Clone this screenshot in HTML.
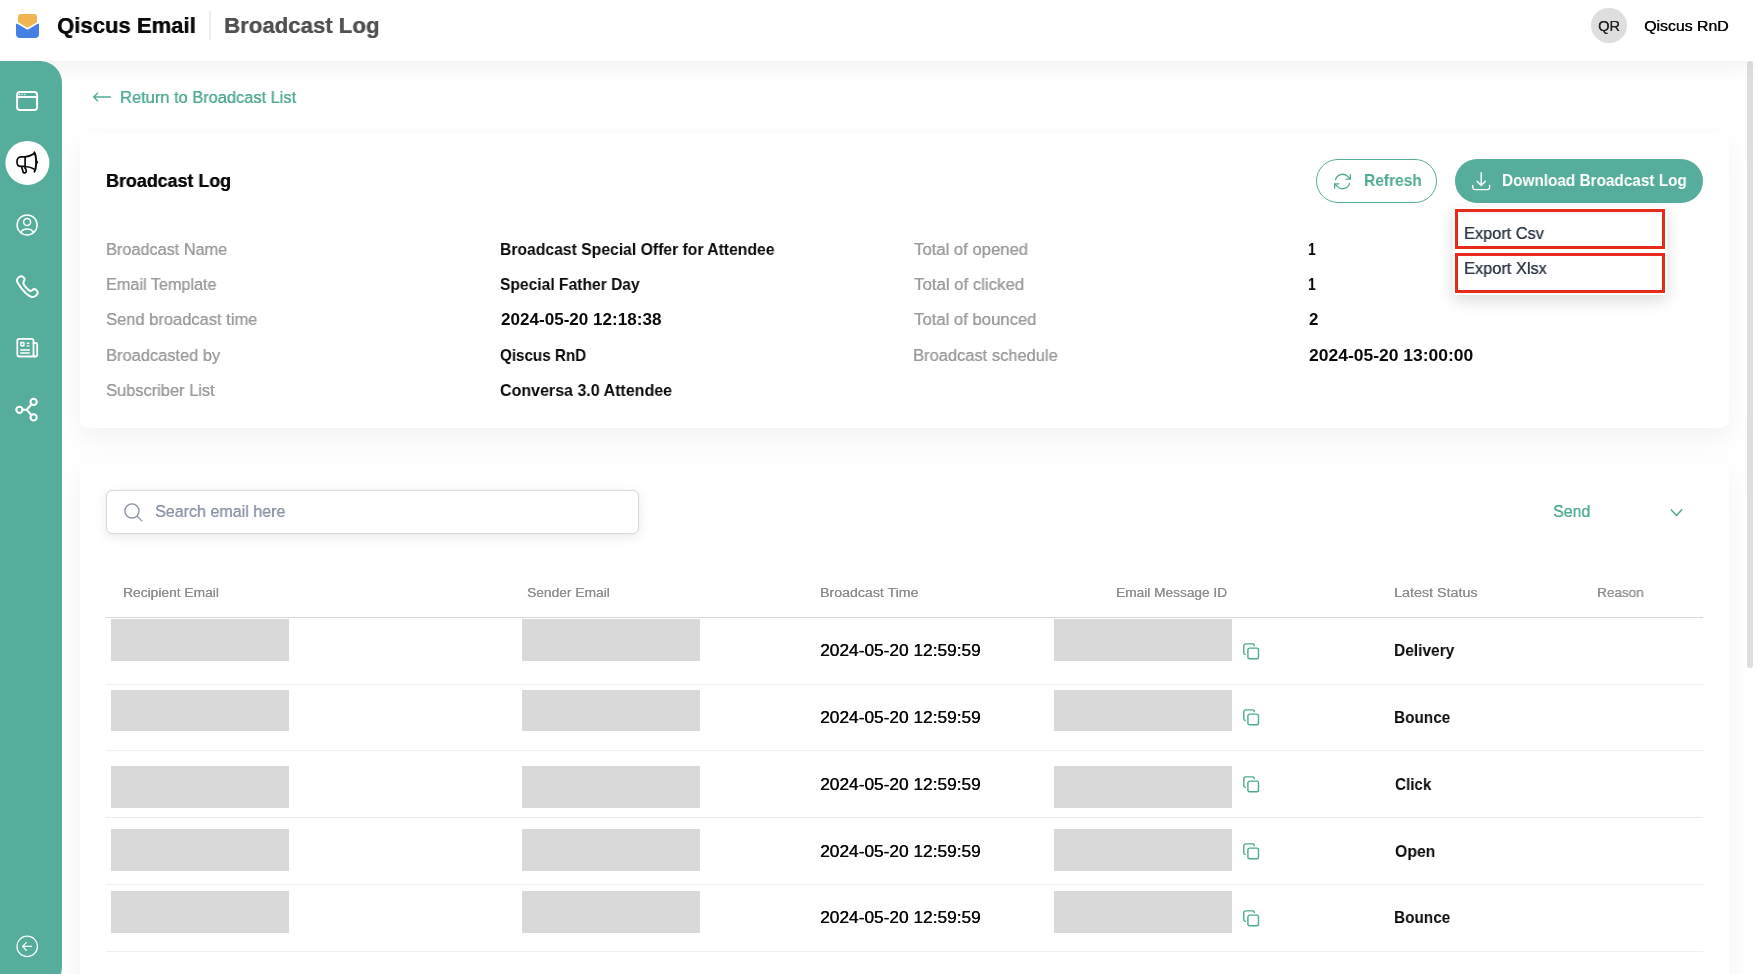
<!DOCTYPE html>
<html lang="en">
<head>
<meta charset="utf-8">
<title>Qiscus Email - Broadcast Log</title>
<style>
*{box-sizing:border-box;margin:0;padding:0}
html,body{width:1756px;height:974px;overflow:hidden;background:#fff;font-family:"Liberation Sans",sans-serif;color:#000}
.abs{position:absolute;white-space:nowrap;line-height:1}
#header{position:absolute;left:0;top:0;width:1756px;height:61px;background:#fff;box-shadow:0 0 28px rgba(0,0,0,.09);z-index:1}
#sidebar{z-index:2;position:absolute;left:0;top:61px;width:62px;height:928px;background:#57ad9b;border-radius:0 22px 22px 0}
.card{position:absolute;left:80px;width:1649px;background:#fff;border-radius:8px;box-shadow:0 10px 30px rgba(0,0,0,.06)}
.tx{will-change:transform;z-index:3;position:absolute;white-space:nowrap;line-height:1;transform-origin:0 0}
.blk{position:absolute;background:#d9d9d9}
.hl{position:absolute;left:106px;width:1597px;height:1px;background:#eef0f4}
</style>
</head>
<body>
<div id="header">
  <svg class="abs" style="left:16px;top:14px" width="23" height="24" viewBox="0 0 23 24">
    <path d="M2 3a3 3 0 0 1 3-3h13a3 3 0 0 1 3 3v5.200l-8.500 5a2 2 0 0 1-2 0L2 8.200z" fill="#f0b552"/>
    <path d="M0 10.600a.9.900 0 0 1 1.350-.780L10.500 15.200a2 2 0 0 0 2 0l9.150-5.380A.9.900 0 0 1 23 10.600V20a4 4 0 0 1-4 4H4a4 4 0 0 1-4-4z" fill="#457fe4"/>
  </svg>
  <div class="abs" style="left:209px;top:11px;width:2px;height:29px;background:#eeeeee"></div>
  <div class="abs" style="left:1591.200px;top:7.800px;width:35.600px;height:35.600px;border-radius:50%;background:#dedede"></div>
</div>
<div id="sidebar"></div>
<svg class="abs" id="sideicons" style="left:0;top:0;z-index:2" width="62" height="974" viewBox="0 0 62 974" fill="none" stroke="#fff" stroke-width="1.500" stroke-linecap="round" stroke-linejoin="round">
  <!-- window -->
  <rect x="17.100" y="92.100" width="20" height="18" rx="2.800" stroke-width="2"/>
  <path d="M17.100 96.900H37.100" stroke-width="2"/>
  <path d="M19.600 94.500h.01M22.200 94.500h.01M24.800 94.500h.01" stroke-width="1.300"/>
  <!-- active circle + megaphone -->
  <circle cx="27.400" cy="162.900" r="22" fill="#fff" stroke="none"/>
  <g stroke="#0b0b0b" stroke-width="1.700">
    <path d="M25.100 156.800H21C18.400 156.800 16.950 159.200 16.950 161.700C16.950 164.200 18.400 166.400 21 166.400H25.200"/>
    <path d="M25.100 156.800V168.200"/>
    <path d="M25.100 156.800C28.500 156.400 31.800 155.400 34 153.800M25.300 166.500C28.600 166.800 31.800 167.600 34 169"/>
    <path d="M34.400 152.400C36.700 156.500 36.700 167.500 34.500 171.600" stroke-width="2"/>
    <path d="M21.800 167.300L23.100 172.100C23.700 173.700 26.800 172.800 26.300 171L25.400 167.800"/>
    <path d="M36.900 161.300a1 1 0 0 1 0 1.700" stroke-width="1.500"/>
  </g>
  <!-- person circle -->
  <circle cx="27.100" cy="224.900" r="10"/>
  <circle cx="27.100" cy="222" r="3.500"/>
  <path d="M20.600 232.400c1.200-2.300 3.600-3.500 6.500-3.500s5.300 1.200 6.500 3.500"/>
  <!-- phone -->
  <path stroke-width="2" d="M16.950 280.400C16.950 278.600 19.300 276.200 21.050 276.200C22.600 276.200 24.700 278 24.700 279.300C24.700 280.600 23 281.600 23.350 283.300C23.900 285.800 28 290.200 30.550 291C32 291.400 32.600 289.050 34 289.050C35.600 289.050 37.750 291 37.750 292.700C37.750 294.600 34.800 296.950 32.900 296.950C30.500 296.950 27.500 294.900 24.900 292.250C22 289.300 19.600 286 18.800 284.550C17.900 282.900 16.950 281.800 16.950 280.400Z"/>
  <!-- newspaper -->
  <g stroke-width="1.800">
  <path d="M33.500 342.900h2.200a1.500 1.500 0 0 1 1.500 1.500v10.300a1.850 1.850 0 0 1-3.700 0"/>
  <path d="M33.500 354.700V340.500a1.700 1.700 0 0 0-1.700-1.700H19a1.700 1.700 0 0 0-1.700 1.700v14a2 2 0 0 0 2 2h16"/>
  </g>
  <rect x="20.900" y="342.500" width="3" height="3.300" rx=".3" stroke-width="1.500"/>
  <path d="M27.200 343.200h1.800M27.200 345.900h1.800" stroke-width="1.400"/>
  <path d="M20.700 350h8.600M20.700 353h8.600" stroke-width="1.600"/>
  <!-- share -->
  <g stroke-width="2.100">
  <circle cx="19.400" cy="409.800" r="3.100"/>
  <circle cx="33.600" cy="401.900" r="3.100"/>
  <circle cx="33.600" cy="417.400" r="3.100"/>
  <path d="M22.500 409.800H26.600M31.600 404.250L26.600 409.800L31.500 415.100"/>
  </g>
  <!-- back circle -->
  <circle cx="27.200" cy="946.400" r="10.200" stroke-width="1.200"/>
  <path d="M31.600 946.400h-8.800M26.300 942.600l-3.800 3.800 3.800 3.800" stroke-width="1.300"/>
</svg>


<!-- return link -->
<svg class="abs" style="left:90px;top:90px" width="24" height="14" viewBox="90 90 24 14" fill="none" stroke="#4fa994" stroke-width="1.300" stroke-linecap="round" stroke-linejoin="round"><path d="M110.400 97H93.800M97.500 93.200L93.700 97l3.800 3.800"/></svg>

<!-- card 1 -->
<div class="card" id="card1" style="top:133px;height:295px"></div>

<div class="abs" style="left:1316px;top:159px;width:121px;height:44px;border:1px solid #57ad9b;border-radius:22px;background:#fff"></div>
<svg class="abs" style="left:1332.400px;top:170.700px" width="21" height="21" viewBox="0 0 24 24" fill="none" stroke="#4fa994" stroke-width="1.500" stroke-linecap="round" stroke-linejoin="round"><path d="M16.023 9.348h4.992v-.001M2.985 19.644v-4.992m0 0h4.992m-4.993 0l3.181 3.183a8.250 8.250 0 0013.803-3.700M4.031 9.865a8.250 8.250 0 0113.803-3.700l3.181 3.182m0-4.991v4.990"/></svg>
<div class="abs" style="left:1455px;top:159px;width:248px;height:44px;border-radius:22px;background:#57ad9b"></div>
<svg class="abs" style="left:1469.800px;top:169.800px" width="22.400" height="22.400" viewBox="0 0 24 24" fill="none" stroke="#fff" stroke-width="1.500" stroke-linecap="round" stroke-linejoin="round"><path d="M3 16.500v2.250A2.250 2.250 0 005.250 21h13.500A2.250 2.250 0 0021 18.750V16.500M16.500 12L12 16.500m0 0L7.500 12m4.500 4.500V3"/></svg>
<!-- dropdown -->
<div class="abs" style="left:1453px;top:207px;width:214px;height:88px;background:#fff;border-radius:4px;box-shadow:0 6px 16px rgba(0,0,0,.14)"></div>
<div class="abs" style="left:1455px;top:209px;width:210px;height:40px;border:3px solid #e7291c"></div>
<div class="abs" style="left:1455px;top:253px;width:210px;height:40px;border:3px solid #e7291c"></div>

<!-- card 2 -->
<div class="card" id="card2" style="top:463px;height:560px"></div>


<div class="abs" style="left:106px;top:490px;width:532.500px;height:43.500px;border:1.300px solid #d3d7de;border-radius:6px;background:#fff;box-shadow:0 3px 12px rgba(0,0,0,.09)"></div>
<svg class="abs" style="left:121.700px;top:500.600px" width="22.700" height="22.700" viewBox="0 0 24 24" fill="none" stroke="#8a92a3" stroke-width="1.400" stroke-linecap="round" stroke-linejoin="round"><path d="M21 21l-5.197-5.197m0 0A7.500 7.500 0 105.196 5.196a7.500 7.500 0 0010.607 10.607z"/></svg>
<svg class="abs" style="left:1668px;top:506px" width="18" height="14" viewBox="1668 506 18 14" fill="none" stroke="#4fa994" stroke-width="1.500" stroke-linecap="round" stroke-linejoin="round"><path d="M1671.400 509.900l5.100 5.500 5.100-5.500"/></svg>
<div class="abs" style="left:106px;top:616.500px;width:1597px;height:1.300px;background:#d4d7de"></div>
<div class="hl" style="top:684px"></div>
<div class="hl" style="top:750px"></div>
<div class="hl" style="top:817px;background:#e9ebef"></div>
<div class="hl" style="top:884px"></div>
<div class="hl" style="top:951px"></div>
<div class="blk" style="left:111px;top:619px;width:178px;height:41.5px"></div>
<div class="blk" style="left:522px;top:619px;width:178px;height:41.5px"></div>
<div class="blk" style="left:1054px;top:619px;width:178px;height:41.5px"></div>
<svg class="abs" style="left:1243px;top:642.5999999999999px" width="18" height="18" viewBox="0 0 18 18" fill="none" stroke="#4fa994" stroke-width="1.400" stroke-linecap="round" stroke-linejoin="round"><rect x="4.900" y="5.100" width="10.600" height="10.700" rx="1.800"/><path d="M11.300 2.600a1.600 1.600 0 0 0-1.500-1.700H2.600A1.800 1.800 0 0 0 .8 2.700v6.900a1.800 1.800 0 0 0 1.500 1.900"/></svg>
<div class="blk" style="left:111px;top:690px;width:178px;height:41.3px"></div>
<div class="blk" style="left:522px;top:690px;width:178px;height:41.3px"></div>
<div class="blk" style="left:1054px;top:690px;width:178px;height:41.3px"></div>
<svg class="abs" style="left:1243px;top:709.3px" width="18" height="18" viewBox="0 0 18 18" fill="none" stroke="#4fa994" stroke-width="1.400" stroke-linecap="round" stroke-linejoin="round"><rect x="4.900" y="5.100" width="10.600" height="10.700" rx="1.800"/><path d="M11.300 2.600a1.600 1.600 0 0 0-1.500-1.700H2.600A1.800 1.800 0 0 0 .8 2.700v6.900a1.800 1.800 0 0 0 1.500 1.900"/></svg>
<div class="blk" style="left:111px;top:766px;width:178px;height:41.7px"></div>
<div class="blk" style="left:522px;top:766px;width:178px;height:41.7px"></div>
<div class="blk" style="left:1054px;top:766px;width:178px;height:41.7px"></div>
<svg class="abs" style="left:1243px;top:776.3px" width="18" height="18" viewBox="0 0 18 18" fill="none" stroke="#4fa994" stroke-width="1.400" stroke-linecap="round" stroke-linejoin="round"><rect x="4.900" y="5.100" width="10.600" height="10.700" rx="1.800"/><path d="M11.300 2.600a1.600 1.600 0 0 0-1.500-1.700H2.600A1.800 1.800 0 0 0 .8 2.700v6.900a1.800 1.800 0 0 0 1.500 1.900"/></svg>
<div class="blk" style="left:111px;top:829.2px;width:178px;height:41.6px"></div>
<div class="blk" style="left:522px;top:829.2px;width:178px;height:41.6px"></div>
<div class="blk" style="left:1054px;top:829.2px;width:178px;height:41.6px"></div>
<svg class="abs" style="left:1243px;top:843.3px" width="18" height="18" viewBox="0 0 18 18" fill="none" stroke="#4fa994" stroke-width="1.400" stroke-linecap="round" stroke-linejoin="round"><rect x="4.900" y="5.100" width="10.600" height="10.700" rx="1.800"/><path d="M11.300 2.600a1.600 1.600 0 0 0-1.500-1.700H2.600A1.800 1.800 0 0 0 .8 2.700v6.900a1.800 1.800 0 0 0 1.500 1.900"/></svg>
<div class="blk" style="left:111px;top:891.3px;width:178px;height:41.7px"></div>
<div class="blk" style="left:522px;top:891.3px;width:178px;height:41.7px"></div>
<div class="blk" style="left:1054px;top:891.3px;width:178px;height:41.7px"></div>
<svg class="abs" style="left:1243px;top:909.8px" width="18" height="18" viewBox="0 0 18 18" fill="none" stroke="#4fa994" stroke-width="1.400" stroke-linecap="round" stroke-linejoin="round"><rect x="4.900" y="5.100" width="10.600" height="10.700" rx="1.800"/><path d="M11.300 2.600a1.600 1.600 0 0 0-1.500-1.700H2.600A1.800 1.800 0 0 0 .8 2.700v6.900a1.800 1.800 0 0 0 1.500 1.900"/></svg>

<div class="abs" style="left:1747px;top:61px;width:6px;height:607px;background:#dedede;border-radius:3px"></div>
<div class="tx" id="t-brand" style="left:57.00px;top:15.00px;font-size:22.6px;font-weight:700;color:#0a0a0a;transform:scaleX(0.9766);text-shadow:0.3px 0 0 currentColor;">Qiscus Email</div>
<div class="tx" id="t-page" style="left:224.00px;top:15.00px;font-size:22.6px;font-weight:700;color:#505050;transform:scaleX(0.9821);text-shadow:0.3px 0 0 currentColor;">Broadcast Log</div>
<div class="tx" id="t-qr" style="left:1598.00px;top:19.00px;font-size:14.7px;font-weight:400;color:#222;transform:scaleX(0.9816);text-shadow:0.2px 0 0 currentColor;">QR</div>
<div class="tx" id="t-user" style="left:1644.00px;top:18.00px;font-size:15.5px;font-weight:400;color:#0a0a0a;transform:scaleX(1.0221);text-shadow:.4px 0 0 currentColor;">Qiscus RnD</div>
<div class="tx" id="t-return" style="left:120.00px;top:90.00px;font-size:16.9px;font-weight:400;color:#4fa994;transform:scaleX(0.9717);text-shadow:0.3px 0 0 currentColor;">Return to Broadcast List</div>
<div class="tx" id="t-title" style="left:106.00px;top:172.00px;font-size:18.3px;font-weight:700;color:#0a0a0a;transform:scaleX(0.9760);text-shadow:0.25px 0 0 currentColor;">Broadcast Log</div>
<div class="tx" id="t-l0" style="left:106.00px;top:242.00px;font-size:16.9px;font-weight:400;color:#9b9b9b;transform:scaleX(0.9626);text-shadow:0.2px 0 0 currentColor;">Broadcast Name</div>
<div class="tx" id="t-l1" style="left:106.00px;top:277.00px;font-size:16.9px;font-weight:400;color:#9b9b9b;transform:scaleX(0.9587);text-shadow:0.2px 0 0 currentColor;">Email Template</div>
<div class="tx" id="t-l2" style="left:106.00px;top:312.00px;font-size:16.9px;font-weight:400;color:#9b9b9b;transform:scaleX(0.9760);text-shadow:0.2px 0 0 currentColor;">Send broadcast time</div>
<div class="tx" id="t-l3" style="left:106.00px;top:348.00px;font-size:16.9px;font-weight:400;color:#9b9b9b;transform:scaleX(0.9720);text-shadow:0.2px 0 0 currentColor;">Broadcasted by</div>
<div class="tx" id="t-l4" style="left:106.00px;top:383.00px;font-size:16.9px;font-weight:400;color:#9b9b9b;transform:scaleX(0.9715);text-shadow:0.2px 0 0 currentColor;">Subscriber List</div>
<div class="tx" id="t-v0" style="left:500.00px;top:242.00px;font-size:16.9px;font-weight:700;color:#0a0a0a;transform:scaleX(0.9302);">Broadcast Special Offer for Attendee</div>
<div class="tx" id="t-v1" style="left:500.00px;top:277.00px;font-size:16.9px;font-weight:700;color:#0a0a0a;transform:scaleX(0.9240);">Special Father Day</div>
<div class="tx" id="t-v2" style="left:501.00px;top:312.00px;font-size:16.9px;font-weight:700;color:#0a0a0a;transform:scaleX(1.0107);">2024-05-20 12:18:38</div>
<div class="tx" id="t-v3" style="left:500.00px;top:348.00px;font-size:16.9px;font-weight:700;color:#0a0a0a;transform:scaleX(0.8999);">Qiscus RnD</div>
<div class="tx" id="t-v4" style="left:500.00px;top:383.00px;font-size:16.9px;font-weight:700;color:#0a0a0a;transform:scaleX(0.9480);">Conversa 3.0 Attendee</div>
<div class="tx" id="t-m0" style="left:914.00px;top:242.00px;font-size:16.9px;font-weight:400;color:#9b9b9b;transform:scaleX(0.9862);text-shadow:0.2px 0 0 currentColor;">Total of opened</div>
<div class="tx" id="t-m1" style="left:914.00px;top:277.00px;font-size:16.9px;font-weight:400;color:#9b9b9b;transform:scaleX(0.9933);text-shadow:0.2px 0 0 currentColor;">Total of clicked</div>
<div class="tx" id="t-m2" style="left:914.00px;top:312.00px;font-size:16.9px;font-weight:400;color:#9b9b9b;transform:scaleX(0.9873);text-shadow:0.2px 0 0 currentColor;">Total of bounced</div>
<div class="tx" id="t-m3" style="left:913.00px;top:348.00px;font-size:16.9px;font-weight:400;color:#9b9b9b;transform:scaleX(0.9749);text-shadow:0.2px 0 0 currentColor;">Broadcast schedule</div>
<div class="tx" id="t-w0" style="left:1308.00px;top:242.00px;font-size:16.9px;font-weight:700;color:#0a0a0a;transform:scaleX(0.8174);">1</div>
<div class="tx" id="t-w1" style="left:1308.00px;top:277.00px;font-size:16.9px;font-weight:700;color:#0a0a0a;transform:scaleX(0.8174);">1</div>
<div class="tx" id="t-w2" style="left:1309.00px;top:312.00px;font-size:16.9px;font-weight:700;color:#0a0a0a;transform:scaleX(0.9684);">2</div>
<div class="tx" id="t-w3" style="left:1309.00px;top:348.00px;font-size:16.9px;font-weight:700;color:#0a0a0a;transform:scaleX(1.0347);">2024-05-20 13:00:00</div>
<div class="tx" id="t-refresh" style="left:1364.00px;top:173.00px;font-size:16.9px;font-weight:700;color:#4fa994;transform:scaleX(0.9194);">Refresh</div>
<div class="tx" id="t-download" style="left:1502.00px;top:173.00px;font-size:16.9px;font-weight:700;color:#fff;transform:scaleX(0.9075);">Download Broadcast Log</div>
<div class="tx" id="t-csv" style="left:1464.00px;top:226.00px;font-size:16.9px;font-weight:400;color:#2d3748;transform:scaleX(0.9662);text-shadow:0.15px 0 0 currentColor;">Export Csv</div>
<div class="tx" id="t-xlsx" style="left:1464.00px;top:261.00px;font-size:16.9px;font-weight:400;color:#2d3748;transform:scaleX(0.9686);text-shadow:0.15px 0 0 currentColor;">Export Xlsx</div>
<div class="tx" id="t-search" style="left:155.00px;top:504.00px;font-size:16.9px;font-weight:400;color:#8b93a6;transform:scaleX(0.9509);text-shadow:0.15px 0 0 currentColor;">Search email here</div>
<div class="tx" id="t-send" style="left:1553.00px;top:504.00px;font-size:16.9px;font-weight:400;color:#4fa994;transform:scaleX(0.9432);text-shadow:0.15px 0 0 currentColor;">Send</div>
<div class="tx" id="t-h0" style="left:123.00px;top:586.00px;font-size:13.7px;font-weight:400;color:#8e8e8e;transform:scaleX(1.0080);text-shadow:0.15px 0 0 currentColor;">Recipient Email</div>
<div class="tx" id="t-h1" style="left:527.00px;top:586.00px;font-size:13.7px;font-weight:400;color:#8e8e8e;transform:scaleX(1.0072);text-shadow:0.15px 0 0 currentColor;">Sender Email</div>
<div class="tx" id="t-h2" style="left:820.00px;top:586.00px;font-size:13.7px;font-weight:400;color:#8e8e8e;transform:scaleX(1.0347);text-shadow:0.15px 0 0 currentColor;">Broadcast Time</div>
<div class="tx" id="t-h3" style="left:1116.00px;top:586.00px;font-size:13.7px;font-weight:400;color:#8e8e8e;transform:scaleX(0.9984);text-shadow:0.15px 0 0 currentColor;">Email Message ID</div>
<div class="tx" id="t-h4" style="left:1394.00px;top:586.00px;font-size:13.7px;font-weight:400;color:#8e8e8e;transform:scaleX(1.0450);text-shadow:0.15px 0 0 currentColor;">Latest Status</div>
<div class="tx" id="t-h5" style="left:1597.00px;top:586.00px;font-size:13.7px;font-weight:400;color:#8e8e8e;transform:scaleX(0.9884);text-shadow:0.15px 0 0 currentColor;">Reason</div>
<div class="tx" id="t-bt0" style="left:820.00px;top:643.00px;font-size:16.9px;font-weight:400;color:#0a0a0a;transform:scaleX(1.0237);text-shadow:0.4px 0 0 currentColor;">2024-05-20 12:59:59</div>
<div class="tx" id="t-st0" style="left:1394.00px;top:643.00px;font-size:16.9px;font-weight:700;color:#0a0a0a;transform:scaleX(0.9181);">Delivery</div>
<div class="tx" id="t-bt1" style="left:820.00px;top:710.00px;font-size:16.9px;font-weight:400;color:#0a0a0a;transform:scaleX(1.0237);text-shadow:0.4px 0 0 currentColor;">2024-05-20 12:59:59</div>
<div class="tx" id="t-st1" style="left:1394.00px;top:710.00px;font-size:16.9px;font-weight:700;color:#0a0a0a;transform:scaleX(0.9084);">Bounce</div>
<div class="tx" id="t-bt2" style="left:820.00px;top:777.00px;font-size:16.9px;font-weight:400;color:#0a0a0a;transform:scaleX(1.0237);text-shadow:0.4px 0 0 currentColor;">2024-05-20 12:59:59</div>
<div class="tx" id="t-st2" style="left:1395.00px;top:777.00px;font-size:16.9px;font-weight:700;color:#0a0a0a;transform:scaleX(0.8995);">Click</div>
<div class="tx" id="t-bt3" style="left:820.00px;top:844.00px;font-size:16.9px;font-weight:400;color:#0a0a0a;transform:scaleX(1.0237);text-shadow:0.4px 0 0 currentColor;">2024-05-20 12:59:59</div>
<div class="tx" id="t-st3" style="left:1395.00px;top:844.00px;font-size:16.9px;font-weight:700;color:#0a0a0a;transform:scaleX(0.9348);">Open</div>
<div class="tx" id="t-bt4" style="left:820.00px;top:910.00px;font-size:16.9px;font-weight:400;color:#0a0a0a;transform:scaleX(1.0237);text-shadow:0.4px 0 0 currentColor;">2024-05-20 12:59:59</div>
<div class="tx" id="t-st4" style="left:1394.00px;top:910.00px;font-size:16.9px;font-weight:700;color:#0a0a0a;transform:scaleX(0.9084);">Bounce</div>

</body>
</html>
